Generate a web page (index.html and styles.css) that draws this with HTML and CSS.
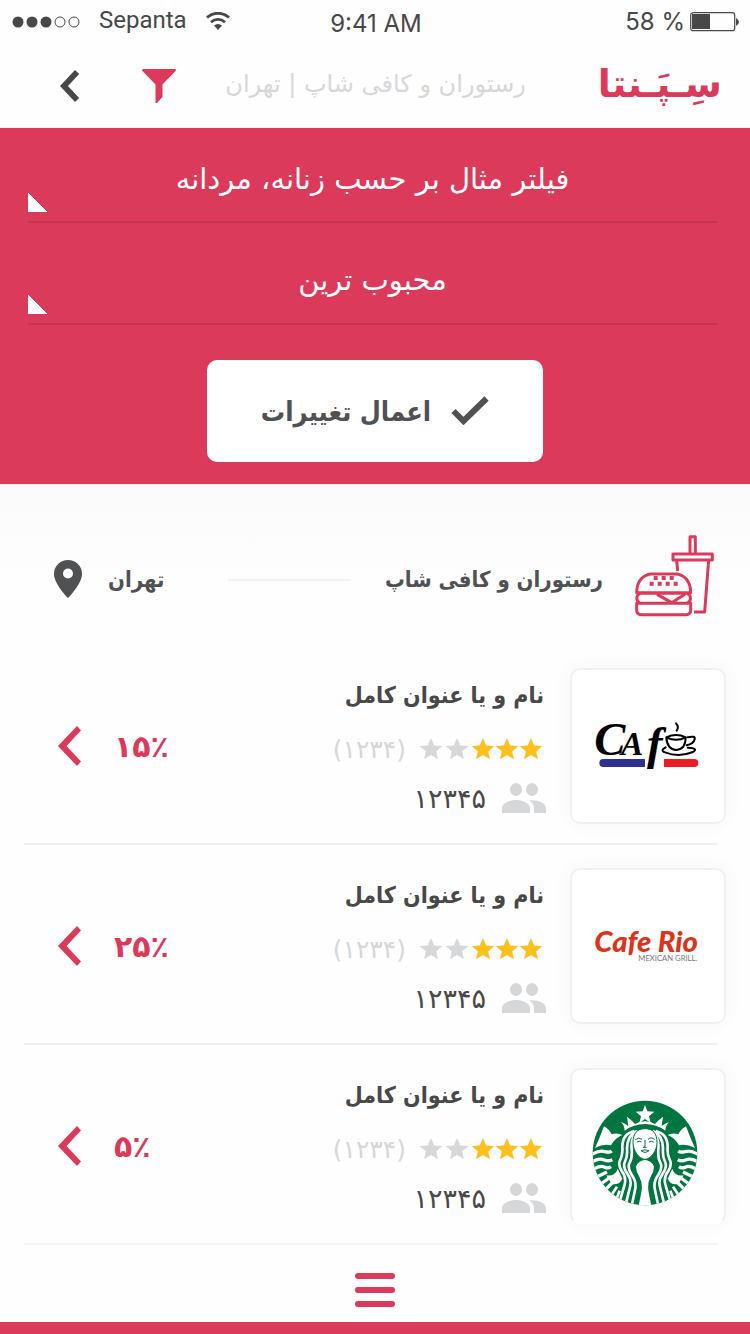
FILE: index.html
```html
<!DOCTYPE html>
<html lang="fa" dir="rtl">
<head>
<meta charset="utf-8">
<meta name="viewport" content="width=device-width, initial-scale=1">
<title>سپنتا</title>
<link rel="stylesheet" href="styles.css">
</head>
<body>
<svg class="defs" width="0" height="0" aria-hidden="true">
  <symbol id="star" viewBox="1 1 22 22"><path d="M12 1l3.200 7.400 8 .7-6.100 5.300 1.900 7.900-7-4.200-7 4.200 1.900-7.900L.8 9.100l8-.7z"/></symbol>
  <symbol id="people" viewBox="0 0 44 30"><ellipse cx="14" cy="6.500" rx="6" ry="6.500"/><ellipse cx="30" cy="6.500" rx="6" ry="6.500"/><path d="M0 30v-5c0-5 8-8 14-8s14 3 14 8v5zM27 17.300c8-1 17 2.500 17 7.700v5H32v-5c0-3.500-2-6-5-7.700z"/></symbol>
  <symbol id="chevron" viewBox="0 0 24 40"><path d="M0 20L19 0l4 4.500L8.500 20 23 35.500 19 40z"/></symbol>
</svg>
<div class="status" dir="ltr">
  <div class="status-side">
    <svg width="68" height="12" viewBox="0 0 68 12" fill="#484848"><circle cx="6" cy="6" r="5.500"/><circle cx="20" cy="6" r="5.500"/><circle cx="34" cy="6" r="5.500"/><g fill="none" stroke="#484848"><circle cx="48" cy="6" r="5"/><circle cx="62" cy="6" r="5"/></g></svg>
    <span class="carrier">Sepanta</span>
    <svg width="24" height="20" viewBox="0 0 24 20" fill="none" stroke="#484848" stroke-width="2.800"><path d="M1 5.500C7-.2 17-.2 23 5.500M5 10.200c4-3.700 10-3.700 14 0"/><path d="M8 13.500q4-3 8 0L12 18z" fill="#484848" stroke="none"/></svg>
  </div>
  <span class="time">9:41 AM</span>
  <div class="status-side status-end">
    <span>58 %</span>
    <svg width="50" height="20" viewBox="0 0 50 20"><rect x=".7" y=".7" width="44" height="18" rx="2.500" fill="none" stroke="#484848" stroke-width="1.200"/><path d="M2 2h18v15H2zM46 6q6 4 0 8z" fill="#484848"/></svg>
  </div>
</div>
<header class="header">
  <a class="logo" href="#">سِـپَـنتا</a>
  <h1 class="header-title">رستوران و کافی شاپ | تهران</h1>
  <button class="icon-button" type="button" aria-label="فیلتر"><svg width="34" height="34" viewBox="0 0 34 34" fill="#db3a5b"><path d="M1 0h32q1 0 1 1.500L20.500 15.500V28l-5.500 6h-1.500V15.500L0 1.500Q0 0 1 0z"/></svg></button>
  <button class="icon-button" type="button" aria-label="بازگشت"><svg width="20" height="32" viewBox="0 0 24 40" fill="#484848" preserveAspectRatio="none"><path d="M0 20L18 0l5 5L9.500 20 23 35l-5 5z"/></svg></button>
</header>
<form class="filters">
  <select class="filter" aria-label="فیلتر"><option>فیلتر مثال بر حسب زنانه، مردانه</option></select>
  <select class="filter" aria-label="ترتیب"><option>محبوب ترین</option></select>
  <button class="apply" type="button">
    <svg width="38" height="30" viewBox="0 0 38 30" fill="none" stroke="#505153" stroke-width="6"><path d="M2.500 15l10 10L35.500 2.500"/></svg>
    <span>اعمال تغییرات</span>
  </button>
</form>
<main class="main">
  <div class="section-head">
    <svg class="food" width="80" height="84" viewBox="796 40 240 252" fill="none" stroke="#db3a5b" stroke-width="9" stroke-linejoin="round">
      <path d="M961 100V51h16v49M910 103h118v18H910zM921 121l3 33M1017 121l-12 156h-32M801 219c0-34 20-56 46-56h70c26 0 46 22 46 56zM812 221c-14 5-14 25 0 30h140c14-5 14-25 0-30zM801 251h162v20q0 14-14 14H815q-14 0-14-14zM862 224l44 25 40-25"/>
      <path d="M840 192h12M864 192h12M888 192h12M912 192h12M852 175h12M876 175h12M900 175h12" stroke-width="12"/>
    </svg>
    <h2 class="section-title">رستوران و کافی شاپ</h2>
    <span class="rule"></span>
    <span class="city">تهران</span>
    <svg width="28" height="38" viewBox="0 0 28 38" fill="#505153"><path fill-rule="evenodd" d="M14 0a14 14 0 0 1 14 14c0 10-14 24-14 24S0 24 0 14A14 14 0 0 1 14 0zm0 8.500a5 5 0 1 0 0 10 5 5 0 0 0 0-10z"/></svg>
  </div>
  <ul class="places">
    <li class="place">
      <div class="card">
        <svg viewBox="21 30 456 456" direction="ltr" role="img" aria-label="Café">
          <path d="M115 309H238" stroke="#2e3192" stroke-width="24" stroke-linecap="round"/><path d="M300 309H388" stroke="#ed1c24" stroke-width="24" stroke-linecap="round"/><path d="M240 297h57v24h-57z" fill="#fff"/>
          <text class="script" x="88" y="284"><tspan class="script-big">C</tspan><tspan x="168">A</tspan><tspan class="script-big" x="246" y="298">f</tspan></text>
          <g fill="none" stroke="#000" stroke-width="6" stroke-linecap="round"><path d="M304 232q30-14 58 0 0 36-28 38-28-2-30-38zM304 232q30 15 58 0M368 232q24-6 21 6-3 14-24 18M302 262q-18 9-2 15 42 16 84-1 18-12-16-13M333 190q10 10 2 22"/></g>
        </svg>
      </div>
      <div class="info">
        <h3 class="name">نام و یا عنوان کامل</h3>
        <div class="rating"><span class="stars"><svg class="on"><use href="#star"/></svg><svg class="on"><use href="#star"/></svg><svg class="on"><use href="#star"/></svg><svg><use href="#star"/></svg><svg><use href="#star"/></svg></span><span class="votes">(۱۲۳۴)</span></div>
        <div class="users"><svg width="44" height="30"><use href="#people"/></svg><span>۱۲۳۴۵</span></div>
      </div>
      <a class="deal" href="#"><strong>۱۵٪</strong><svg width="24" height="40"><use href="#chevron"/></svg></a>
    </li>
    <li class="place">
      <div class="card">
        <svg viewBox="21 30 456 456" direction="ltr" role="img" aria-label="Cafe Rio Mexican Grill">
          <text class="rio" x="88" y="276">Cafe Rio</text>
          <text class="grill" x="220" y="304">MEXICAN GRILL.</text>
        </svg>
      </div>
      <div class="info">
        <h3 class="name">نام و یا عنوان کامل</h3>
        <div class="rating"><span class="stars"><svg class="on"><use href="#star"/></svg><svg class="on"><use href="#star"/></svg><svg class="on"><use href="#star"/></svg><svg><use href="#star"/></svg><svg><use href="#star"/></svg></span><span class="votes">(۱۲۳۴)</span></div>
        <div class="users"><svg width="44" height="30"><use href="#people"/></svg><span>۱۲۳۴۵</span></div>
      </div>
      <a class="deal" href="#"><strong>۲۵٪</strong><svg width="24" height="40"><use href="#chevron"/></svg></a>
    </li>
    <li class="place">
      <div class="card card-open">
        <svg viewBox="21 30 456 456" role="img" aria-label="Starbucks">
          <defs>
            <clipPath id="disc"><circle cx="240" cy="279" r="157"/></clipPath>
            <g id="half">
              <path fill="#fff" d="M117 199Q104 234 90 264q26-14 48-8 12-22 34-31-16-8-32-2-8-16-23-24zM124 346q26 4 34-20l14 30q-8 20-32 16zM168 186q12 4 22 12l-4-28q12 8 24 22 12-8 30-8v8q-34 0-61 20 0-14-11-26z"/>
              <g fill="none" stroke="#fff" stroke-width="10"><path d="M78 285q24-16 42-10 14 4 20-2M80 306q22-13 38-6 12 5 24-1M86 328q20-14 34-6 10 4 18-2M96 350l30-14M108 372l24-18M122 388l20-20"/><path d="M140 404l16-24M154 418l10-26" stroke-width="8"/></g>
              <g fill="none" stroke="#fff" stroke-width="8"><path d="M208 213q-36 8-36 48 2 20-6 38-8 14 4 34 16 20 8 44l-14 48M216 213q-30 14-30 52 2 24-6 40-8 14 8 38 14 18 6 42l-12 48M222 214q-26 16-22 54 2 26-6 40-8 14 6 36 16 22 10 46l-10 48"/></g>
              <path fill="#fff" d="M241 300q-20 0-28 20 0 14 10 30 12 22 5 52l-8 40h21z"/>
            </g>
          </defs>
          <circle cx="240" cy="279" r="157" fill="#00753f"/>
          <g clip-path="url(#disc)"><use href="#half"/><use href="#half" transform="matrix(-1 0 0 1 480 0)"/></g>
          <path fill="#fff" d="M240 135l7 19 21 1-16 14 5 20-17-12-17 12 5-20-16-14 21-1z"/>
          <path fill="#fff" stroke="#00753f" stroke-width="3" d="M240 206c-24 0-36 14-36 42 0 26 20 50 36 50s36-24 36-50c0-28-12-42-36-42z"/>
          <path d="M211 239q10-9 20-1M249 238q10-9 20 1M215 246q8-4 14 0M252 246q8-4 14 0M240 240v20l-5 2h10M228 272q12-5 24 0-12 10-24 0z" fill="none" stroke="#00753f" stroke-width="3"/>
        </svg>
      </div>
      <div class="info">
        <h3 class="name">نام و یا عنوان کامل</h3>
        <div class="rating"><span class="stars"><svg class="on"><use href="#star"/></svg><svg class="on"><use href="#star"/></svg><svg class="on"><use href="#star"/></svg><svg><use href="#star"/></svg><svg><use href="#star"/></svg></span><span class="votes">(۱۲۳۴)</span></div>
        <div class="users"><svg width="44" height="30"><use href="#people"/></svg><span>۱۲۳۴۵</span></div>
      </div>
      <a class="deal" href="#"><strong>۵٪</strong><svg width="24" height="40"><use href="#chevron"/></svg></a>
    </li>
  </ul>
</main>
<nav class="tabbar"><button class="icon-button" type="button" aria-label="منو"><svg width="40" height="34" viewBox="0 0 40 34" stroke="#db3a5b" stroke-width="6" stroke-linecap="round"><path d="M3 3h34M3 17h34M3 31h34"/></svg></button></nav>
</body>
</html>
```
FILE: styles.css
```css
* { box-sizing: border-box; }
body {
  margin: 0;
  min-height: 100vh;
  display: flex;
  flex-direction: column;
  background: #fefefe;
  color: #484848;
  font-family: "DejaVu Sans", sans-serif;
}
svg { display: block; flex: none; }
.defs { position: absolute; }
h1, h2, h3 { margin: 0; }
button { border: 0; padding: 0; background: none; font: inherit; color: inherit; cursor: pointer; }
a { color: inherit; text-decoration: none; }

.status {
  display: flex;
  align-items: center;
  height: 44px;
  padding: 0 10px 0 12px;
  font: 24px/28px Inter, sans-serif;
}
.status-side { display: flex; flex: 1; align-items: center; gap: 19px; }
.status-end { justify-content: flex-end; gap: 5px; }
.time { padding-top: 4px; }
.carrier { padding-bottom: 4px; font-family: Roboto, sans-serif; }

.header {
  display: flex;
  align-items: center;
  height: 84px;
  padding: 0 28px 0 60px;
}
.logo { padding-bottom: 4px; color: #db3a5b; font-size: 38px; font-weight: bold; line-height: 60px; white-space: nowrap; }
.header-title { flex: 1; padding: 0 72px 4px 0; color: #d6d7d9; font-size: 24px; font-weight: normal; white-space: nowrap; }
.icon-button + .icon-button { margin-right: 62px; }

.filters {
  display: flex;
  flex-direction: column;
  padding-bottom: 22px;
  background: #db3a5b;
}
.filter {
  appearance: none;
  height: 102px;
  margin: 0 33px 0 28px;
  padding: 14px 0 0;
  border: 0;
  border-bottom: 2px solid #c73452;
  border-radius: 0;
  background: linear-gradient(45deg, #fff 50%, transparent 50%) left 0 bottom 9px / 20px 20px no-repeat;
  color: #fff;
  font: 29px/36px "DejaVu Sans", sans-serif;
  text-align: center;
  text-align-last: center;
}
.filter:first-child { height: 95px; padding-top: 8px; }
.apply {
  display: flex;
  align-items: center;
  justify-content: center;
  align-self: center;
  gap: 20px;
  width: 336px;
  height: 102px;
  margin-top: 35px;
  border-radius: 10px;
  background: #fff;
  color: #505153;
  font: bold 27px "DejaVu Sans Condensed", "DejaVu Sans", sans-serif;
}

.main { flex: 1; background: linear-gradient(#fbfbfb, #fefefe 100px); }
.section-head {
  display: flex;
  align-items: center;
  height: 161px;
  padding: 28px 35px 0 54px;
  color: #505153;
}
.food { margin-bottom: 8px; }
.section-title, .city { padding-top: 2px; font: bold 22px/30px "DejaVu Sans Condensed", "DejaVu Sans", sans-serif; }
.section-title { margin-right: 32px; }
.rule { flex: 1; height: 2px; margin: 2px 34px 0 64px; background: #f3f3f4; }
.city { margin-left: 26px; }

.places { list-style: none; margin: 0 24px; margin-right: 32px; padding: 0; }
.place {
  display: flex;
  align-items: center;
  height: 200px;
  padding: 4px 0 0 34px;
  border-bottom: 2px solid #f0f0f1;
}
.place:last-child { border-color: #f5f5f5; }
.card {
  width: 156px;
  height: 156px;
  margin-right: -8px;
  border: 2px solid #f0f0f0;
  border-radius: 10px;
  background: #fff;
  box-shadow: 0 0 20px rgba(0, 0, 0, 0.04);
}
.card-open { border-bottom-color: #fff; }
.script { font: italic bold 100px "Liberation Serif", serif; }
.script-big { font-size: 140px; }
.rio { fill: #dc341a; font: italic 900 88px Lato, sans-serif; }
.grill { fill: #777; font: 23px Lato, sans-serif; }

.info { flex: 1; margin-right: 24px; }
.name { padding: 0 2px 4px 0; font: bold 23px/48px "DejaVu Sans Condensed", "DejaVu Sans", sans-serif; }
.rating, .users { display: flex; align-items: center; height: 52px; }
.rating { padding-right: 4px; gap: 14px; color: #d6d7d9; font-size: 25px; }
.stars { display: flex; gap: 2px; }
.stars svg { width: 22px; height: 22px; margin-right: 2px; fill: #d6d7d9; }
.stars .on { margin: 0; fill: #fbc01d; }
.users { gap: 16px; height: 46px; font-size: 27px; }
.users svg { fill: #d6d7d9; }
.deal { display: flex; align-items: center; justify-content: flex-end; gap: 32px; color: #db3a5b; font-size: 30px; }
.deal svg { fill: currentColor; }

.tabbar {
  display: flex;
  align-items: center;
  justify-content: center;
  height: 89px;
  border-bottom: 12px solid #db3a5b;
  padding-top: 13px;
}
```
